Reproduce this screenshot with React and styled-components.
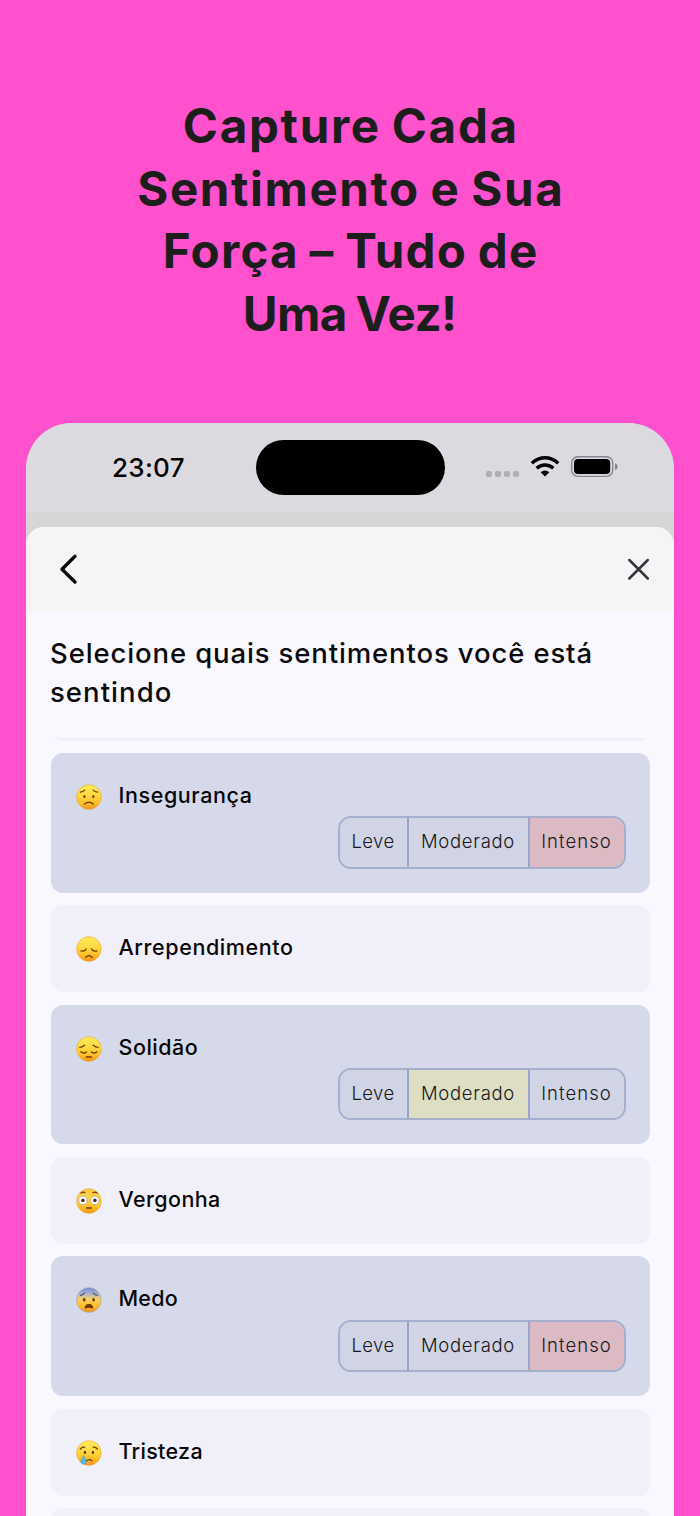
import React from "react";
import styled, { createGlobalStyle } from "styled-components";

const Global = createGlobalStyle`
  * { box-sizing: border-box; }
  html, body { margin: 0; padding: 0; background: #ff50cd; }
  body { font-family: Inter, "Liberation Sans", sans-serif; }
`;

const Page = styled.main`
  width: 700px;
  height: 1516px;
  overflow: hidden;
  background: #ff50cd;
  display: flex;
  flex-direction: column;
  align-items: center;
`;

const Headline = styled.h1`
  margin: 0;
  height: 422.5px;
  flex: none;
  padding-top: 95px;
  color: #1c1e1c;
  font-size: 47.5px;
  font-weight: 650;
  line-height: 62.6px;
  word-spacing: -2px;
  text-align: center;
`;

const Line = styled.span`
  display: block;
  white-space: nowrap;
  letter-spacing: ${(p) => p.$track || 0}px;
  margin-right: ${(p) => -(p.$track || 0)}px;
`;

const Phone = styled.section`
  width: 648px;
  flex: 1;
  min-height: 0;
  overflow: hidden;
  border-radius: 46px 46px 0 0;
  background: #d6d6d6;
  display: flex;
  flex-direction: column;
`;

const StatusBar = styled.div`
  height: 89.5px;
  flex: none;
  background: #dcd9e0;
  display: grid;
  grid-template-columns: 230px 188.5px 1fr;
  padding-top: 17.5px;
`;

const Clock = styled.div`
  padding-left: 86px;
  height: 55px;
  line-height: 55px;
  font-size: 26px;
  font-weight: 550;
  letter-spacing: 0.3px;
  color: #000;
`;

const Island = styled.div`
  height: 55px;
  border-radius: 28px;
  background: #000;
`;

const Indicators = styled.div`
  height: 55px;
  padding-left: 40.5px;
  display: flex;
  align-items: flex-start;
`;

const Sheet = styled.div`
  margin-top: 15px;
  flex: 1;
  min-height: 0;
  border-radius: 18px 18px 0 0;
  overflow: hidden;
  background: #f9f8ff;
  display: flex;
  flex-direction: column;
`;

const SheetHeader = styled.header`
  height: 84px;
  flex: none;
  background: #f5f5f5;
  display: flex;
  justify-content: space-between;
  align-items: center;
  padding: 0 24px 0 32px;
`;

const IconButton = styled.button`
  border: 0;
  padding: 0;
  background: none;
  display: flex;
`;

const Title = styled.h2`
  margin: 0;
  height: 127px;
  flex: none;
  padding: 23px 0 0 24px;
  font-size: 27.5px;
  font-weight: 450;
  line-height: 39px;
  color: #0b0b0d;
`;

const List = styled.div`
  flex: 1;
  min-height: 0;
  overflow: hidden;
  display: flex;
  flex-direction: column;
  justify-content: flex-start;
  gap: 12.5px;
  padding: 0 24px 0 24.5px;
`;

const Card = styled.article`
  flex: none;
  height: ${(p) => (p.$selected ? 139.7 : 87)}px;
  border-radius: 12px;
  background: ${(p) => (p.$selected ? "#d6d9e9" : "#f1eff9")};
  padding: 24px 24.5px 24px 24.5px;
  display: flex;
  flex-direction: column;
  justify-content: space-between;
`;

const ScrolledCard = styled(Card)`
  margin-top: -84.5px;
`;

const Feeling = styled.div`
  display: flex;
  height: 39px;
  gap: 16.5px;
`;

const FeelingName = styled.span`
  font-size: 21.5px;
  font-weight: 470;
  line-height: 36.4px;
  letter-spacing: ${(p) => p.$track || 0}px;
  color: #08080a;
`;

const Segments = styled.div`
  align-self: flex-end;
  flex: none;
  width: 288px;
  height: 52.5px;
  margin-top: auto;
  display: grid;
  grid-template-columns: 67px 121px 1fr;
  border: 2px solid #a4afce;
  border-radius: 13px;
  overflow: hidden;
`;

const tones = { Leve: "#d0d4e4", Moderado: "#dddec3", Intenso: "#dcbac4" };

const Segment = styled.button`
  border: 0;
  border-left: ${(p) => (p.$first ? 0 : "2px solid #98a5c8")};
  padding: 0 0 2px;
  background: ${(p) => p.$tone};
  font: 350 18.5px Inter, "Liberation Sans", sans-serif;
  letter-spacing: ${(p) => p.$track}px;
  text-align: center;
  white-space: nowrap;
  color: #17181c;
`;

const ink = { fill: "none", stroke: "#6f3b08", strokeWidth: 1.25, strokeLinecap: "round", strokeLinejoin: "round" };

const faces = {
  worried: (
    <g {...ink}>
      <path d="M4.5 8.2Q7 8 8.8 6.1M21.5 8.2Q19 8 17.2 6.1M8.7 20Q13 16.2 17.3 20" />
      <ellipse cx="8.5" cy="12.6" rx="1.1" ry="1.5" fill="#6f3b08" stroke="none" />
      <ellipse cx="17.5" cy="12.6" rx="1.1" ry="1.5" fill="#6f3b08" stroke="none" />
    </g>
  ),
  disappointed: (
    <g {...ink}>
      <path d="M5 14.9Q9.3 15.8 10.2 12.9M21 14.9Q16.7 15.8 15.8 12.9M9.8 21.3Q13 17.9 16.2 21.3" />
    </g>
  ),
  pensive: (
    <g {...ink}>
      <path d="M3.8 11.3Q7 11.2 8.8 9.2M22.2 11.3Q19 11.2 17.2 9.2M4.9 15.7Q7.8 18.2 10.6 15.9M15.4 15.9Q18.2 18.2 21.1 15.7" />
      <path d="M10.6 21H15.4" strokeWidth="1.7" />
    </g>
  ),
  flushed: (
    <g {...ink}>
      <path d="M5 5Q7 3.6 9 4.7M17 4.7Q19 3.6 21 5" />
      <circle cx="7" cy="12.4" r="4.3" fill="#fff" stroke="#a9a397" strokeWidth=".8" />
      <circle cx="19" cy="12.4" r="4.3" fill="#fff" stroke="#a9a397" strokeWidth=".8" />
      <circle cx="7" cy="12.4" r="1.8" fill="#4d3524" stroke="none" />
      <circle cx="19" cy="12.4" r="1.8" fill="#4d3524" stroke="none" />
      <path d="M10.7 20H15.3" strokeWidth="1.5" />
    </g>
  ),
  fearful: (
    <g {...ink}>
      <path d="M4.7 8.3Q7 8 8.6 6.2M21.3 8.3Q19 8 17.4 6.2" stroke="#47506f" />
      <ellipse cx="8.3" cy="12.7" rx="1.4" ry="1.8" fill="#6f3b08" stroke="none" />
      <ellipse cx="17.7" cy="12.7" rx="1.4" ry="1.8" fill="#6f3b08" stroke="none" />
      <path d="M9.4 21Q9.6 17.6 13 17.6T16.6 21Q13 19.4 9.4 21Z" fill="#6f3b08" />
    </g>
  ),
  crying: (
    <g {...ink}>
      <path d="M4.4 9.2Q6.2 6.6 8.8 7.2M21.6 9.2Q19.8 6.6 17.2 7.2M10.4 21Q13 18.5 16 20.8" />
      <ellipse cx="9" cy="12.4" rx="1.2" ry="1.7" fill="#6f3b08" stroke="none" />
      <ellipse cx="17" cy="12.4" rx="1.2" ry="1.7" fill="#6f3b08" stroke="none" />
      <path d="M7.7 16Q10.7 20.2 10.4 22.2A2.8 2.8 0 0 1 5 22.2Q5 20 7.7 16Z" fill="#55b9f2" stroke="#3699dd" strokeWidth=".5" />
    </g>
  ),
};

const FaceSvg = styled.svg`
  flex: none;
  margin-top: 7px;
`;

function Face({ kind }) {
  const id = `skin-${kind}`;
  return (
    <FaceSvg width="27" height="26" viewBox="-.9 0 27 26">
      <defs>
        <linearGradient id={id} x1="0" y1="0" x2="0" y2="1">
          {kind === "fearful" ? (
            <>
              <stop offset="0" stopColor="#7189dd" />
              <stop offset=".24" stopColor="#a9b2cf" />
              <stop offset=".45" stopColor="#f5d165" />
            </>
          ) : (
            <>
              <stop offset="0" stopColor={kind === "flushed" ? "#ffc943" : "#ffec58"} />
              <stop offset=".45" stopColor="#ffd83e" />
            </>
          )}
          <stop offset=".75" stopColor="#ffbd27" />
          <stop offset="1" stopColor="#f2911b" />
        </linearGradient>
      </defs>
      <circle cx="13" cy="13" r="12.3" fill={`url(#${id})`} stroke={kind === "fearful" ? "#9b9bb0" : "#eda529"} strokeWidth=".6" />
      {faces[kind]}
    </FaceSvg>
  );
}

const levels = [
  ["Leve", 0.4],
  ["Moderado", 0.7],
  ["Intenso", 1.05],
];

const feelings = [
  { name: "Insegurança", face: "worried", level: "Intenso", track: 0.6 },
  { name: "Arrependimento", face: "disappointed", track: 0.6 },
  { name: "Solidão", face: "pensive", level: "Moderado", track: 0.5 },
  { name: "Vergonha", face: "flushed", track: 0.4 },
  { name: "Medo", face: "fearful", level: "Intenso", track: 0.2 },
  { name: "Tristeza", face: "crying", track: 0.3 },
];

function FeelingCard({ name, face, level, track }) {
  return (
    <Card $selected={Boolean(level)}>
      <Feeling>
        <Face kind={face} />
        <FeelingName $track={track}>{name}</FeelingName>
      </Feeling>
      {level && (
        <Segments>
          {levels.map(([label, t], i) => (
            <Segment key={label} $first={i === 0} $track={t} $tone={label === level ? tones[label] : tones.Leve}>
              {label}
            </Segment>
          ))}
        </Segments>
      )}
    </Card>
  );
}

function StatusIcons() {
  return (
    <svg width="136" height="55" viewBox="485 440 136 55">
      <g fill="#b1afb5">
        <rect x="486" y="471" width="6" height="6" rx="1.8" />
        <rect x="495" y="471" width="6" height="6" rx="1.8" />
        <rect x="504" y="471" width="6" height="6" rx="1.8" />
        <rect x="513" y="471" width="6" height="6" rx="1.8" />
      </g>
      <g fill="none" stroke="#000" strokeWidth="3.4">
        <path d="M531.8 463.2Q538 457.7 545 457.7T558.2 463.2" />
        <path d="M536.7 468.3Q540.3 465 545 465T553.3 468.3" />
      </g>
      <path d="M540.6 472.3Q545 468.5 549.4 472.3L545 476.6Z" />
      <rect x="571.7" y="456.7" width="41" height="19.7" rx="6.2" fill="none" stroke="#88868c" strokeWidth="1.4" />
      <rect x="574" y="459" width="36.2" height="15" rx="4" />
      <path d="M615 463.2Q617.7 464 617.7 466.5T615 470Z" fill="#88868c" />
    </svg>
  );
}

export default function App() {
  return (
    <Page>
      <Global />
      <Headline>
        <Line $track={1.7}>Capture Cada</Line>
        <Line $track={1.6}>Sentimento e Sua</Line>
        <Line $track={1.3}>Força – Tudo de</Line>
        <Line $track={-0.55}>Uma Vez!</Line>
      </Headline>
      <Phone>
        <StatusBar>
          <Clock>23:07</Clock>
          <Island />
          <Indicators>
            <StatusIcons />
          </Indicators>
        </StatusBar>
        <Sheet>
          <SheetHeader>
            <IconButton aria-label="Voltar">
              <svg width="20" height="32" viewBox="0 0 20 32" fill="none" stroke="#0b0b0d" strokeWidth="3.4" strokeLinecap="round" strokeLinejoin="round">
                <path d="M17 3.3L4 16.3L17 29" />
              </svg>
            </IconButton>
            <IconButton aria-label="Fechar">
              <svg width="24" height="24" viewBox="0 0 24 24" fill="none" stroke="#34343f" strokeWidth="2.5" strokeLinecap="round">
                <path d="M3.3 3L21.8 21.5M21.8 3L3.3 21.5" />
              </svg>
            </IconButton>
          </SheetHeader>
          <Title>
            <Line $track={0.87}>Selecione quais sentimentos você está</Line>
            <Line $track={1.05}>sentindo</Line>
          </Title>
          <List>
            <ScrolledCard />
            {feelings.map((f) => (
              <FeelingCard key={f.name} {...f} />
            ))}
            <Card />
          </List>
        </Sheet>
      </Phone>
    </Page>
  );
}
